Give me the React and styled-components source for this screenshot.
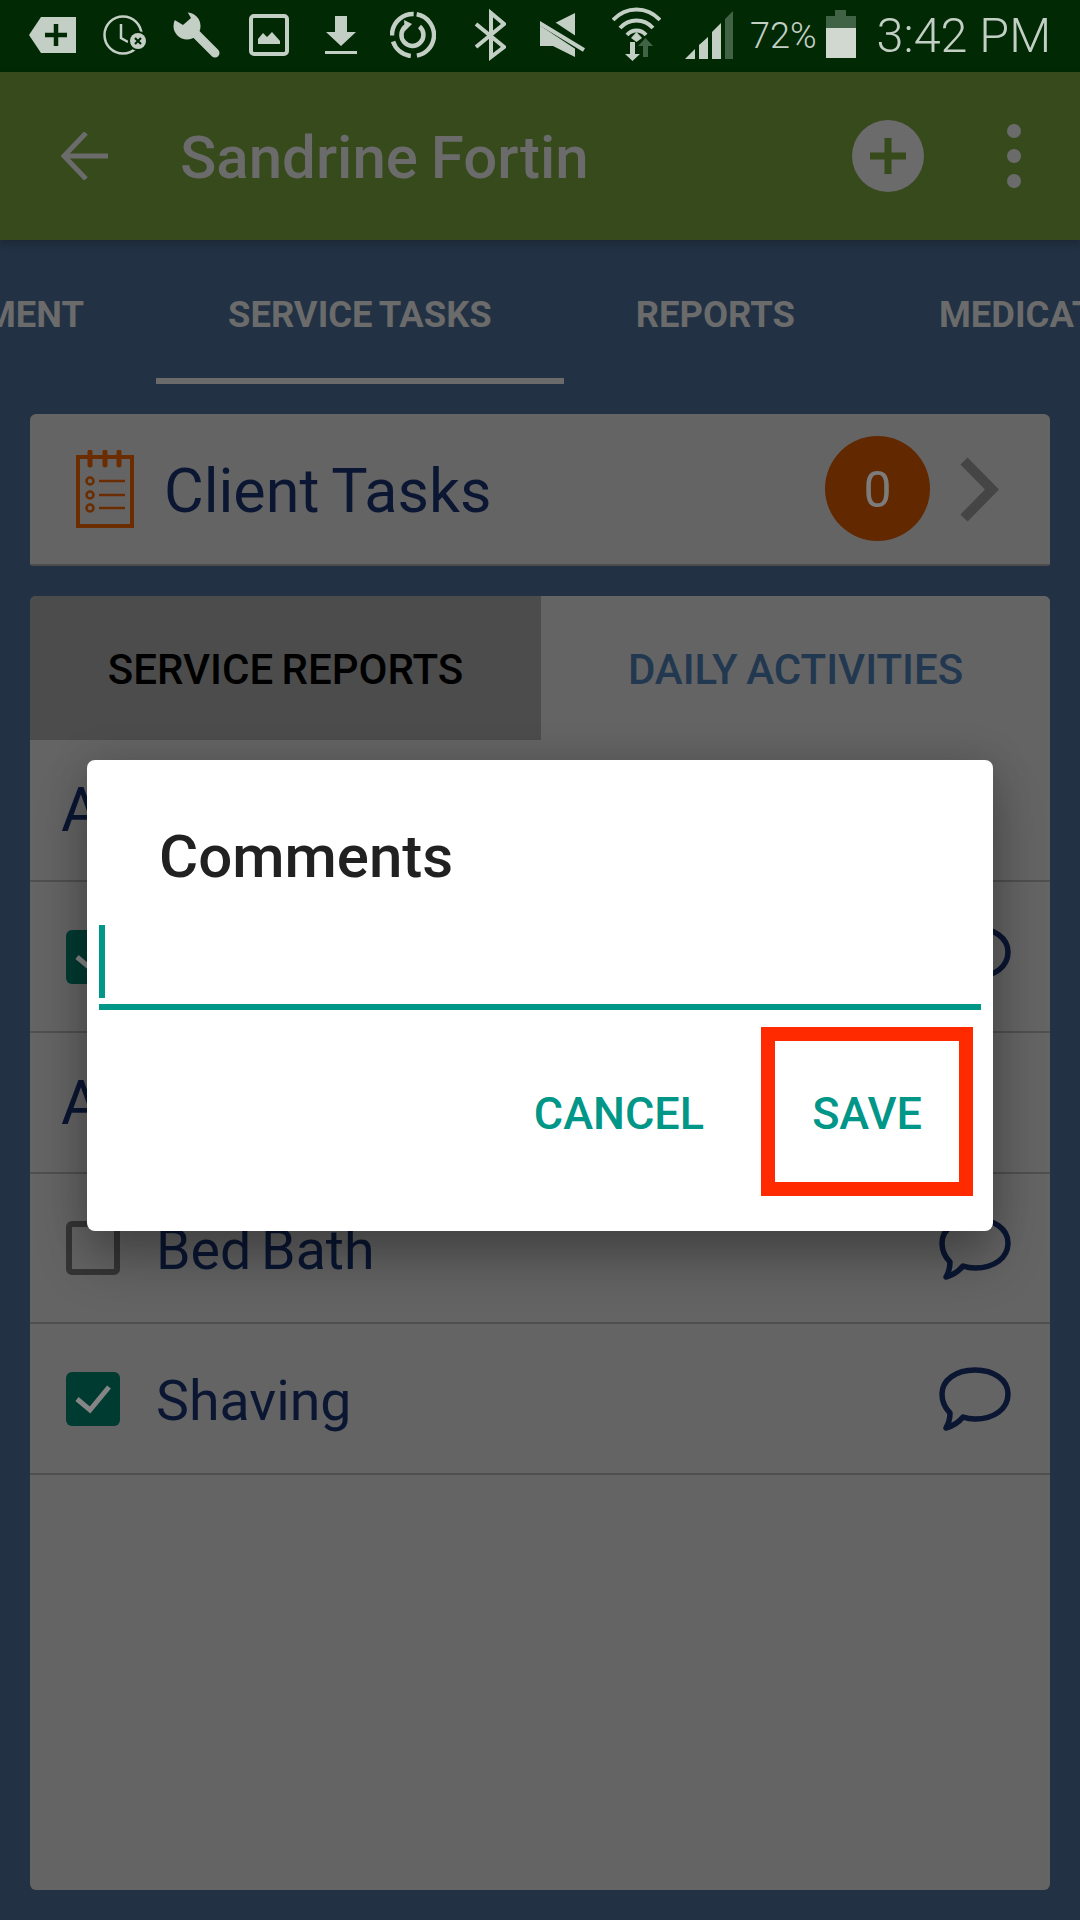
import styled, { createGlobalStyle } from "styled-components";

const GlobalStyle = createGlobalStyle`
  html, body {
    margin: 0;
    padding: 0;
    background: #223244;
  }
  * {
    box-sizing: border-box;
  }
`;

const ICON = "#c3cfc5";
const DIM = "#3f6344";
const BAR = "#012a04";
const INK = "#0a1632";
const MUTED = "#6b6b6b";

const Page = styled.div`
  position: relative;
  width: 1080px;
  height: 1920px;
  overflow: hidden;
  display: flex;
  flex-direction: column;
  background: #223244;
  font-family: Roboto, "Liberation Sans", sans-serif;
  word-spacing: -2px;
`;

const StatusBar = styled.div`
  flex: none;
  height: 72px;
  background: ${BAR};
  display: flex;
  align-items: center;
  padding-left: 29px;
`;

const StatusIcon = styled.svg`
  flex: none;
  height: 72px;
  margin-left: ${p => p.$ml || 0}px;
`;

const Percent = styled.span`
  margin-left: 17px;
  color: ${ICON};
  font-size: 36px;
  font-weight: 300;
  line-height: 72px;
`;

const Clock = styled.span`
  margin-left: 21px;
  color: ${ICON};
  font-size: 48.5px;
  font-weight: 300;
  line-height: 72px;
  white-space: nowrap;
  word-spacing: 0;
`;

const AppBar = styled.header`
  flex: none;
  height: 168px;
  background: #364a1c;
  display: flex;
  align-items: center;
  padding-left: 61px;
  position: relative;
  z-index: 1;
  box-shadow: 0 4px 8px rgba(0, 0, 0, 0.22);
`;

const Title = styled.h1`
  margin: 0 0 0 72px;
  padding-top: 2px;
  flex: 1;
  color: ${MUTED};
  font-size: 60px;
  font-weight: 500;
`;

const Glyph = styled.svg`
  flex: none;
`;

const MenuDots = styled(Glyph)`
  margin: 0 59px 0 83px;
`;

const Tabs = styled.nav`
  flex: none;
  height: 144px;
  display: flex;
  overflow: hidden;
`;

const Tab = styled.div`
  flex: none;
  height: 144px;
  padding: 10px 72px 0;
  display: flex;
  align-items: center;
  justify-content: ${p => (p.$clipLeft ? "flex-end" : "flex-start")};
  width: ${p => (p.$clipLeft ? "156px" : "auto")};
  overflow: ${p => (p.$clipLeft ? "hidden" : "visible")};
  border-bottom: 6px solid ${p => (p.$active ? MUTED : "transparent")};
  color: ${MUTED};
  font-size: 36.4px;
  font-weight: 700;
  white-space: nowrap;
  span {
    flex: none;
  }
`;

const Content = styled.main`
  flex: 1;
  min-height: 0;
  display: flex;
  flex-direction: column;
  gap: 30px;
  padding: 30px;
`;

const TaskCard = styled.section`
  flex: none;
  height: 152px;
  background: #646464;
  border-bottom: 2px solid #4c4c4c;
  border-radius: 6px 6px 2px 2px;
  display: flex;
  align-items: center;
  padding-left: 46px;
`;

const CardTitle = styled.span`
  margin-left: 30px;
  padding-top: 3px;
  flex: 1;
  color: ${INK};
  font-size: 61px;
`;

const Badge = styled.span`
  flex: none;
  width: 105px;
  height: 105px;
  margin-bottom: 2px;
  padding-top: 4px;
  border-radius: 50%;
  background: #622800;
  color: #7c7c7c;
  font-size: 50px;
  display: flex;
  align-items: center;
  justify-content: center;
`;

const Chevron = styled.svg`
  flex: none;
  margin: 0 50px 0 30px;
`;

const Panel = styled.section`
  flex: 1;
  min-height: 0;
  background: #646464;
  border-radius: 6px;
  overflow: hidden;
`;

const Segments = styled.div`
  height: 144px;
  display: flex;
`;

const Segment = styled.div`
  width: ${p => (p.$active ? "511px" : "509px")};
  padding-top: 3px;
  background: ${p => (p.$active ? "#4c4c4c" : "#646464")};
  color: ${p => (p.$active ? "#000" : "#223850")};
  font-size: 42px;
  font-weight: 500;
  display: flex;
  align-items: center;
  justify-content: center;
`;

const GroupRow = styled.div`
  height: ${p => p.$h || 141}px;
  padding-left: 31px;
  border-bottom: 2px solid #4f4f4f;
  display: flex;
  align-items: center;
  color: ${INK};
  font-size: 61px;
`;

const TaskRow = styled.div`
  height: ${p => p.$h || 150}px;
  padding: 0 39px 0 36px;
  border-bottom: 2px solid #4f4f4f;
  display: flex;
  align-items: center;
  color: ${INK};
  font-size: 55.5px;
  word-spacing: -4px;
`;

const Box = styled.span`
  flex: none;
  width: 54px;
  height: 54px;
  border-radius: 6px;
  display: flex;
  align-items: center;
  justify-content: center;
  background: ${p => (p.$checked ? "#003b32" : "transparent")};
  border: ${p => (p.$checked ? "0" : "6px solid #353535")};
`;

const RowLabel = styled.span`
  flex: 1;
  margin-left: 36px;
  padding-top: 5px;
`;

const Dialog = styled.div`
  position: absolute;
  left: 87px;
  top: 760px;
  width: 906px;
  height: 471px;
  background: #fff;
  border-radius: 8px;
  box-shadow: 0 30px 50px rgba(0, 0, 0, 0.28), 0 0 40px rgba(0, 0, 0, 0.14);
  display: flex;
  flex-direction: column;
  padding: 0 12px;
`;

const DialogTitle = styled.h2`
  margin: 60px 0 0 60px;
  height: 74px;
  color: #212121;
  font-size: 60px;
  line-height: 74px;
  font-weight: 500;
`;

const Field = styled.div`
  margin-top: 31px;
  height: 85px;
  border-bottom: 6px solid #009688;
`;

const Caret = styled.div`
  width: 6px;
  height: 73px;
  background: #009688;
`;

const Actions = styled.div`
  margin-top: 17px;
  display: flex;
  justify-content: flex-end;
  align-items: center;
  padding-right: 8px;
`;

const ActionButton = styled.button`
  appearance: none;
  background: #fff;
  color: #009688;
  font-family: inherit;
  font-size: 45px;
  font-weight: 500;
  padding: 3px 0 0;
`;

const CancelButton = styled(ActionButton)`
  border: 0;
  margin-right: 57px;
`;

const SaveButton = styled(ActionButton)`
  width: 212px;
  height: 169px;
  border: 14px solid #ff2a00;
`;

const BubbleIcon = () => (
  <Glyph width="72" height="64" viewBox="0 0 72 64">
    <path
      d="M36 3C55 3 69 13 69 27C69 42 55 52 36 52C32 52 28 51.5 24 50C20 55 14 59 7 61C10 56 11 50 11 46C6 41 3 34 3 27C3 13 17 3 36 3Z"
      fill="none"
      stroke={INK}
      strokeWidth="5.5"
      strokeLinejoin="round"
    />
  </Glyph>
);

const Tick = () => (
  <svg width="38" height="30" viewBox="0 0 38 30">
    <path d="M3 15L16 26L35 3" fill="none" stroke="#858585" strokeWidth="5" />
  </svg>
);

const CheckRow = ({ label, checked, h }) => (
  <TaskRow $h={h}>
    <Box $checked={checked}>{checked && <Tick />}</Box>
    <RowLabel>{label}</RowLabel>
    <BubbleIcon />
  </TaskRow>
);

const ClipboardIcon = () => (
  <Glyph width="58" height="78" viewBox="0 0 58 78">
    <g fill="none" stroke="#6b2c00">
      <rect x="2" y="7" width="54" height="69" strokeWidth="4" />
      <path d="M14 2V15M29 2V15M43 2V15" strokeWidth="5" strokeLinecap="round" />
      <circle cx="14" cy="31" r="3.5" strokeWidth="2.5" />
      <circle cx="14" cy="45" r="3.5" strokeWidth="2.5" />
      <circle cx="14" cy="58" r="3.5" strokeWidth="2.5" />
      <path d="M23 31H49M23 45H49M23 58H49" strokeWidth="2.5" />
    </g>
  </Glyph>
);

const App = () => (
  <Page>
    <GlobalStyle />
    <StatusBar>
      <StatusIcon width="47" viewBox="0 0 47 72">
        <path d="M0 35L12 17H47V53H12Z" fill={ICON} />
        <path d="M27 24V46M16 35H38" stroke={BAR} strokeWidth="4.5" />
      </StatusIcon>
      <StatusIcon $ml="27" width="44" viewBox="0 0 44 72">
        <circle cx="20" cy="35" r="18.5" fill="none" stroke={ICON} strokeWidth="2.5" />
        <path d="M18 24V38L25 42" fill="none" stroke={ICON} strokeWidth="2.5" />
        <circle cx="35" cy="41" r="10" fill={BAR} />
        <circle cx="35" cy="41" r="8" fill={ICON} />
        <path d="M32 38L38 44M38 38L32 44" stroke={BAR} strokeWidth="2.2" />
      </StatusIcon>
      <StatusIcon $ml="26" width="48" viewBox="0 0 48 72">
        <circle cx="14" cy="26" r="13.5" fill={ICON} />
        <path d="M-2 8L11 6L18 18L10 25L0 19Z" fill={BAR} />
        <path d="M20 31L42 53" stroke={ICON} strokeWidth="9" strokeLinecap="round" />
      </StatusIcon>
      <StatusIcon $ml="28" width="40" viewBox="0 0 40 72">
        <rect x="2" y="16" width="36" height="38" rx="3" fill="none" stroke={ICON} strokeWidth="4" />
        <path d="M9 44V39L14 33L18 37L23 32L31 41V44Z" fill={ICON} />
      </StatusIcon>
      <StatusIcon $ml="36" width="32" viewBox="0 0 32 72">
        <path d="M10 16H22V32H31L16 46L1 32H10Z" fill={ICON} />
        <rect x="0" y="51" width="32" height="3" fill={ICON} />
      </StatusIcon>
      <StatusIcon $ml="33" width="46" viewBox="0 0 46 72">
        <g fill="none" stroke={ICON}>
          <circle cx="23" cy="35" r="21" strokeWidth="4.5" strokeDasharray="58 6 24 6 34 4" transform="rotate(-80 23 35)" />
          <path d="M29.5 26.5A11 11 0 1 1 16 26" strokeWidth="4.5" />
        </g>
        <path d="M14 20L22 24L15 31Z" fill={ICON} />
      </StatusIcon>
      <StatusIcon $ml="38" width="32" viewBox="0 0 32 72">
        <path d="M2 24L30 47L17 57V13L30 24L2 47" fill="none" stroke={ICON} strokeWidth="4" />
      </StatusIcon>
      <StatusIcon $ml="34" width="46" viewBox="0 0 46 72">
        <path d="M0 24H13L35 13V57L13 46H0Z" fill={ICON} />
        <path d="M-6 15L50 52" stroke={BAR} strokeWidth="11" />
        <path d="M-4 21L44 50" stroke={ICON} strokeWidth="4" />
      </StatusIcon>
      <StatusIcon $ml="26" width="49" viewBox="0 0 49 72">
        <g fill="none" stroke={ICON} strokeWidth="4">
          <path d="M1 20C14 6 35 6 48 20" />
          <path d="M8 28C17 18 32 18 41 28" />
          <path d="M15 35C20 29 29 29 34 35" />
        </g>
        <path d="M19 38L24.5 32L30 38L24.5 42Z" fill={ICON} />
        <path d="M18 42H23V54H28L20.5 61L13 54H18Z" fill={ICON} />
        <path d="M31 57H36V46H41L33.5 38L26 46H31Z" fill={DIM} />
      </StatusIcon>
      <StatusIcon $ml="24" width="48" viewBox="0 0 48 72">
        <path d="M0 59L10 49V59Z" fill={ICON} />
        <path d="M14 59V45L23 37V59Z" fill={ICON} />
        <path d="M27 59V32L36 23V59Z" fill={ICON} />
        <path d="M40 59V19L48 11V59Z" fill={DIM} />
      </StatusIcon>
      <Percent>72%</Percent>
      <StatusIcon $ml="9" width="30" viewBox="0 0 30 72">
        <rect x="9" y="10" width="11" height="7" fill={DIM} />
        <rect x="0" y="16" width="30" height="12" fill={DIM} />
        <rect x="0" y="28" width="30" height="30" fill="#d0d8d0" />
      </StatusIcon>
      <Clock>3:42 PM</Clock>
    </StatusBar>

    <AppBar>
      <Glyph width="47" height="48" viewBox="0 0 47 48">
        <path d="M25 1L3 24L25 47M3 24H47" fill="none" stroke={MUTED} strokeWidth="5" />
      </Glyph>
      <Title>Sandrine Fortin</Title>
      <Glyph width="72" height="72" viewBox="0 0 72 72">
        <circle cx="36" cy="36" r="36" fill={MUTED} />
        <path d="M36 18V54M18 36H54" stroke="#364a1c" strokeWidth="7" />
      </Glyph>
      <MenuDots width="14" height="64" viewBox="0 0 14 64">
        <circle cx="7" cy="7" r="7" fill={MUTED} />
        <circle cx="7" cy="32" r="7" fill={MUTED} />
        <circle cx="7" cy="57" r="7" fill={MUTED} />
      </MenuDots>
    </AppBar>

    <Tabs>
      <Tab $clipLeft>
        <span>MENT</span>
      </Tab>
      <Tab $active>
        <span>SERVICE TASKS</span>
      </Tab>
      <Tab>
        <span>REPORTS</span>
      </Tab>
      <Tab>
        <span>MEDICAT</span>
      </Tab>
    </Tabs>

    <Content>
      <TaskCard>
        <ClipboardIcon />
        <CardTitle>Client Tasks</CardTitle>
        <Badge>0</Badge>
        <Chevron width="40" height="65" viewBox="0 0 40 65">
          <path d="M4 4L32 32.5L4 61" fill="none" stroke="#454545" strokeWidth="10" />
        </Chevron>
      </TaskCard>

      <Panel>
        <Segments>
          <Segment $active>SERVICE REPORTS</Segment>
          <Segment>DAILY ACTIVITIES</Segment>
        </Segments>
        <GroupRow $h={142}>A</GroupRow>
        <CheckRow checked h={151} />
        <GroupRow>A</GroupRow>
        <CheckRow label="Bed Bath" />
        <CheckRow label="Shaving" checked h={151} />
      </Panel>
    </Content>

    <Dialog>
      <DialogTitle>Comments</DialogTitle>
      <Field>
        <Caret />
      </Field>
      <Actions>
        <CancelButton>CANCEL</CancelButton>
        <SaveButton>SAVE</SaveButton>
      </Actions>
    </Dialog>
  </Page>
);

export default App;
